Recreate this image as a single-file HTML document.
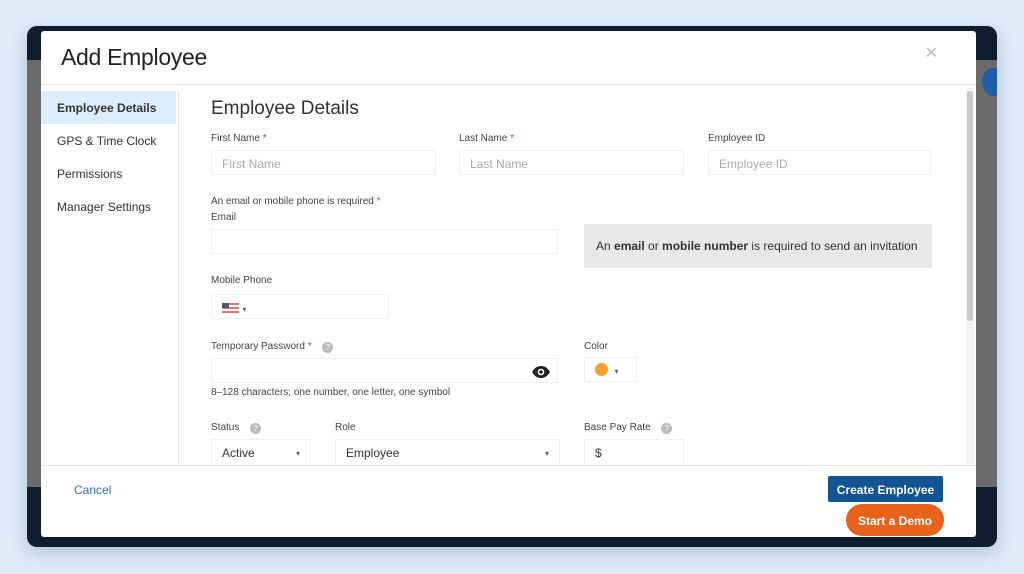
<!DOCTYPE html>
<html><head><style>
*{box-sizing:border-box;margin:0;padding:0}
body{width:1024px;height:574px;background:#deecfa;font-family:"Liberation Sans",sans-serif;position:relative;overflow:hidden;color:#333}
.win{position:absolute;left:27px;top:26px;width:970px;height:521px;background:#0f1e2e;border-radius:10px;box-shadow:0 6px 18px rgba(40,70,110,.25);overflow:hidden}
.gray{position:absolute;left:0;top:34px;width:970px;height:427px;background:#6b6b6b}
.modal{position:absolute;left:41px;top:31px;width:935px;height:506px;background:#fff;border-radius:3px;overflow:hidden}
.a{position:absolute}
.t{font-size:23px;color:#222;left:20px;top:13px;letter-spacing:-.3px}
.x{right:38px;top:12px;font-size:16px;color:#bbb}
.hr{left:0;right:0;height:1px;background:#e6e6e6}
.nav{left:0;top:60px;width:138px;height:374px;border-right:1px solid #e6e6e6}
.ni{position:absolute;left:0;width:135px;height:33px;padding:10px 0 0 16px;font-size:12px;color:#333}
.lb{font-size:10px;color:#444}
.r{color:#d33}
.in{position:absolute;border:1px solid #efefef;height:25px;font-size:12px;color:#aaa;padding:6px 0 0 10px;background:#fff}
.btn{position:absolute;color:#fff;font-size:12px;font-weight:bold;text-align:center}
.q{display:inline-block;width:11px;height:11px;border-radius:50%;background:#bbb;color:#fff;font-size:8px;text-align:center;line-height:11px;margin-left:8px;vertical-align:-1px}
.car{font-size:8px;color:#666}
</style></head><body>
<div class="win"><div class="gray"></div><div class="a" style="left:955px;top:42px;width:22px;height:28px;border-radius:50%;background:#1c5ea8"></div></div>
<div class="modal">
<div class="a t">Add Employee</div>
<div class="a x">✕</div>
<div class="a hr" style="top:53px"></div>
<div class="a nav">
<div class="ni" style="top:0;background:#dcedfb;font-weight:bold">Employee Details</div>
<div class="ni" style="top:33px">GPS &amp; Time Clock</div>
<div class="ni" style="top:66px">Permissions</div>
<div class="ni" style="top:99px">Manager Settings</div>
</div>
<div class="a" style="left:925px;top:57px;width:8px;height:376px;background:#f3f3f3"><div style="margin:3px 1px;height:230px;background:#c9c9c9;border-radius:3px"></div></div>
<div class="a" style="left:170px;top:67px;font-size:19px;color:#333">Employee Details</div>
<div class="a lb" style="left:170px;top:102px">First Name <span class="r">*</span></div>
<div class="a lb" style="left:418px;top:102px">Last Name <span class="r">*</span></div>
<div class="a lb" style="left:667px;top:102px">Employee ID</div>
<div class="in" style="left:170px;top:119px;width:225px">First Name</div>
<div class="in" style="left:418px;top:119px;width:225px">Last Name</div>
<div class="in" style="left:667px;top:119px;width:223px">Employee ID</div>
<div class="a lb" style="left:170px;top:165px">An email or mobile phone is required <span class="r">*</span></div>
<div class="a lb" style="left:170px;top:181px">Email</div>
<div class="in" style="left:170px;top:198px;width:347px"></div>
<div class="a" style="left:543px;top:193px;width:348px;height:44px;background:#e8e8e8;font-size:12px;color:#333;padding:15px 0 0 12px">An <b>email</b> or <b>mobile number</b> is required to send an invitation</div>
<div class="a lb" style="left:170px;top:244px">Mobile Phone</div>
<div class="in" style="left:170px;top:263px;width:178px"><span style="display:inline-block;width:17px;height:10px;background:linear-gradient(#d77 0 20%,#fff 20% 40%,#d77 40% 60%,#fff 60% 80%,#d77 80%);position:relative;vertical-align:-1px"><span style="position:absolute;left:0;top:0;width:7px;height:5px;background:#556"></span></span> <span class="car">▾</span></div>
<div class="a lb" style="left:170px;top:310px">Temporary Password <span class="r">*</span> <span class="q">?</span></div>
<div class="in" style="left:170px;top:327px;width:347px"></div>
<svg class="a" style="left:490px;top:334px" width="20" height="14" viewBox="0 0 20 14"><path d="M1 7C4 2 7 1 10 1s6 1 9 6c-3 5-6 6-9 6S4 12 1 7z" fill="#222"/><circle cx="10" cy="7" r="3.3" fill="#fff"/><circle cx="10" cy="7" r="1.8" fill="#222"/></svg>
<div class="a" style="left:170px;top:356px;font-size:10px;color:#444">8–128 characters; one number, one letter, one symbol</div>
<div class="a lb" style="left:543px;top:310px">Color</div>
<div class="in" style="left:543px;top:326px;width:53px;padding-top:5px"><span style="display:inline-block;width:13px;height:13px;border-radius:50%;background:#f6a030;vertical-align:-2px"></span> &nbsp;<span class="car">▾</span></div>
<div class="a lb" style="left:170px;top:391px">Status <span class="q">?</span></div>
<div class="a lb" style="left:294px;top:391px">Role</div>
<div class="a lb" style="left:543px;top:391px">Base Pay Rate <span class="q">?</span></div>
<div class="in" style="left:170px;top:408px;width:100px;color:#333;height:27px">Active <span class="car" style="position:absolute;right:10px;top:9px">▾</span></div>
<div class="in" style="left:294px;top:408px;width:225px;color:#333;height:27px">Employee <span class="car" style="position:absolute;right:10px;top:9px">▾</span></div>
<div class="in" style="left:543px;top:408px;width:100px;color:#333;height:27px">$</div>
<div class="a hr" style="top:434px"></div>
<div class="a" style="left:33px;top:452px;font-size:12px;color:#2f73b8">Cancel</div>
<div class="btn" style="left:787px;top:445px;width:115px;height:26px;background:#125592;border-radius:2px;padding-top:7px">Create Employee</div>
<div class="btn" style="left:805px;top:473px;width:98px;height:32px;background:#e8621c;border-radius:16px;padding-top:10px">Start a Demo</div>
</div>
</body></html>
